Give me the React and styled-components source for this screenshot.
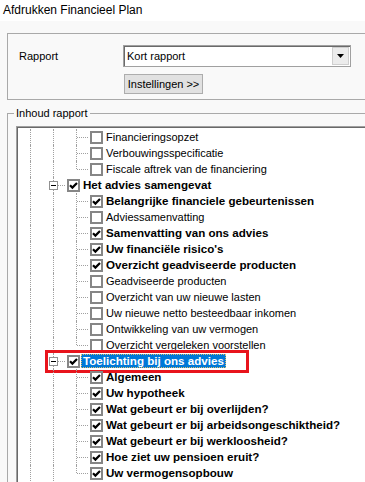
import React from 'react'
import styled, { createGlobalStyle } from 'styled-components'

const GlobalStyle = createGlobalStyle`
  html, body { margin: 0; padding: 0; }
  body {
    background: #f9f9f9;
    font-family: "Liberation Sans", Arial, sans-serif;
    font-size: 11px;
    color: #000;
    overflow: hidden;
  }
`

const Window = styled.div`
  width: 365px;
  height: 482px;
  overflow: hidden;
  background: #f9f9f9;
`

const TitleBar = styled.div`
  height: 21px;
  background: #fff;
  padding-left: 3px;
  font-size: 12px;
  line-height: 20px;
`

const Body = styled.div`
  padding: 12px 0 0 7px;
`

const SettingsBox = styled.div`
  width: 420px;
  box-sizing: border-box;
  border: 1px solid #a9a9a9;
  padding: 11px 0 5px 11px;
  display: grid;
  grid-template-columns: 104px 228px;
  row-gap: 7px;
  align-items: center;
`

const Label = styled.span`
  font-size: 11px;
`

const Combo = styled.div`
  height: 22px;
  box-sizing: border-box;
  border: 1px solid #a0a0a0;
  box-shadow: inset 1px 1px 0 #6a6a6a;
  background: #fff;
  display: flex;
  align-items: center;
  justify-content: space-between;
  padding: 1px 1px 1px 3px;
`

const DropButton = styled.div`
  width: 17px;
  height: 18px;
  box-sizing: border-box;
  border: 1px solid #cfcfcf;
  background: #ececec;
  display: flex;
  align-items: center;
  justify-content: center;
`

const Button = styled.div`
  grid-column: 2;
  justify-self: start;
  margin-left: 1px;
  width: 79px;
  height: 20px;
  box-sizing: border-box;
  border: 1px solid #adadad;
  background: #e1e1e1;
  display: flex;
  align-items: center;
  justify-content: center;
  font-size: 11px;
`

const ContentGroup = styled.fieldset`
  margin: 6px 0 0 0;
  width: 420px;
  min-width: 0;
  box-sizing: border-box;
  border: 1px solid #a9a9a9;
  border-bottom: none;
  padding: 6px 0 0 8px;
`

const Legend = styled.legend`
  padding: 0 2px;
  margin-left: -2px;
  font-size: 11px;
  line-height: 14px;
`

const Tree = styled.div`
  background: #fff;
  border-top: 1px solid #a0a0a0;
  border-left: 1px solid #a0a0a0;
  box-shadow: inset 1px 1px 0 #696969;
  padding: 2px 0 0 2px;
  height: 400px;
`

const Row = styled.div`
  position: relative;
  display: flex;
  align-items: center;
  height: 16px;
`

const Guide = styled.div`
  position: relative;
  flex: none;
  width: 23px;
  height: 16px;
  display: flex;
  align-items: center;

  &::before {
    content: '';
    position: absolute;
    left: 11px;
    top: 0;
    bottom: ${p => (p.$kind === 'elbow' ? '8px' : '0')};
    border-left: 1px dotted #a0a0a0;
  }

  &::after {
    content: '';
    display: ${p => (p.$kind === 'pipe' ? 'none' : 'block')};
    position: absolute;
    left: 12px;
    top: 8px;
    width: 11px;
    border-top: 1px dotted #a0a0a0;
  }
`

const Expander = styled.div`
  position: relative;
  z-index: 1;
  margin-left: 7px;
  width: 9px;
  height: 9px;
  box-sizing: border-box;
  border: 1px solid #919191;
  background: #fff;
  display: flex;
  align-items: center;
  justify-content: center;

  &::before {
    content: '';
    width: 5px;
    height: 1px;
    background: #000;
  }
`

const Check = styled.div`
  flex: none;
  margin-left: 2px;
  width: 13px;
  height: 13px;
  box-sizing: border-box;
  border: 2px solid #868686;
  background: #fff;
  display: flex;
  align-items: center;
  justify-content: center;
`

const Text = styled.span`
  margin-left: 1px;
  padding: 0 2px;
  height: 14px;
  line-height: 14px;
  white-space: nowrap;
  font-size: ${p => (p.$bold ? '11.6px' : '11px')};
  font-weight: ${p => (p.$bold ? 700 : 400)};
  background: ${p => (p.$selected ? '#0078d7' : 'transparent')};
  color: ${p => (p.$selected ? '#fff' : '#000')};
  outline: ${p => (p.$selected ? '1px dotted #d8c070' : 'none')};
  outline-offset: -1px;
`

const Marker = styled.div`
  position: absolute;
  left: 26px;
  top: -3px;
  width: 204px;
  height: 23px;
  box-sizing: border-box;
  border: 3px solid #e8141c;
  pointer-events: none;
`

const rows = [
  { level: 3, label: 'Financieringsopzet', line: 'tee' },
  { level: 3, label: 'Verbouwingsspecificatie', line: 'tee' },
  { level: 3, label: 'Fiscale aftrek van de financiering', line: 'elbow' },
  { level: 2, label: 'Het advies samengevat', on: true },
  { level: 3, label: 'Belangrijke financiele gebeurtenissen', on: true, line: 'tee' },
  { level: 3, label: 'Adviessamenvatting', line: 'tee' },
  { level: 3, label: 'Samenvatting van ons advies', on: true, line: 'tee' },
  { level: 3, label: "Uw financiële risico's", on: true, line: 'tee' },
  { level: 3, label: 'Overzicht geadviseerde producten', on: true, line: 'tee' },
  { level: 3, label: 'Geadviseerde producten', line: 'tee' },
  { level: 3, label: 'Overzicht van uw nieuwe lasten', line: 'tee' },
  { level: 3, label: 'Uw nieuwe netto besteedbaar inkomen', line: 'tee' },
  { level: 3, label: 'Ontwikkeling van uw vermogen', line: 'tee' },
  { level: 3, label: 'Overzicht vergeleken voorstellen', line: 'elbow' },
  { level: 2, label: 'Toelichting bij ons advies', on: true, selected: true },
  { level: 3, label: 'Algemeen', on: true, line: 'tee' },
  { level: 3, label: 'Uw hypotheek', on: true, line: 'tee' },
  { level: 3, label: 'Wat gebeurt er bij overlijden?', on: true, line: 'tee' },
  { level: 3, label: 'Wat gebeurt er bij arbeidsongeschiktheid?', on: true, line: 'tee' },
  { level: 3, label: 'Wat gebeurt er bij werkloosheid?', on: true, line: 'tee' },
  { level: 3, label: 'Hoe ziet uw pensioen eruit?', on: true, line: 'tee' },
  { level: 3, label: 'Uw vermogensopbouw', on: true, line: 'elbow' },
]

function CheckMark() {
  return (
    <svg width="9" height="9" viewBox="0 0 9 9">
      <path d="M1 4.2 L3.4 6.6 L8 2" fill="none" stroke="#000" strokeWidth="2.2" />
    </svg>
  )
}

function TreeRow({ row }) {
  return (
    <Row>
      <Guide $kind="pipe" />
      {row.level === 2 ? (
        <Guide $kind="tee">
          <Expander />
        </Guide>
      ) : (
        <>
          <Guide $kind="pipe" />
          <Guide $kind={row.line} />
        </>
      )}
      <Check>{row.on && <CheckMark />}</Check>
      <Text $bold={row.on} $selected={row.selected}>{row.label}</Text>
      {row.selected && <Marker />}
    </Row>
  )
}

export default function App() {
  return (
    <Window>
      <GlobalStyle />
      <TitleBar>Afdrukken Financieel Plan</TitleBar>
      <Body>
        <SettingsBox>
          <Label>Rapport</Label>
          <Combo>
            <span>Kort rapport</span>
            <DropButton>
              <svg width="7" height="4" viewBox="0 0 7 4">
                <path d="M0 0 H7 L3.5 4 Z" fill="#000" />
              </svg>
            </DropButton>
          </Combo>
          <Button>Instellingen &gt;&gt;</Button>
        </SettingsBox>
        <ContentGroup>
          <Legend>Inhoud rapport</Legend>
          <Tree>
            {rows.map(r => (
              <TreeRow key={r.label} row={r} />
            ))}
          </Tree>
        </ContentGroup>
      </Body>
    </Window>
  )
}
